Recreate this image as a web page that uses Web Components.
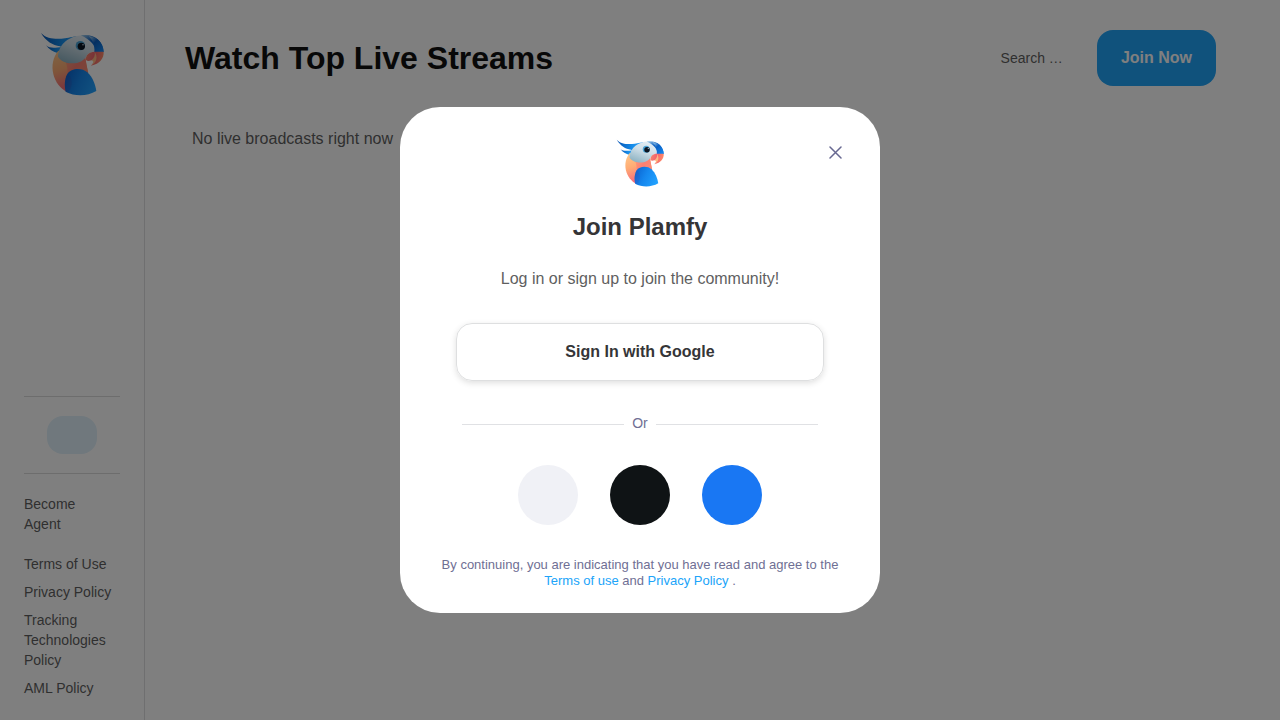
<!DOCTYPE html>
<html lang="en">
<head>
<meta charset="utf-8">
<title>Plamfy</title>
<style>
html,body{margin:0;height:100%;overflow:hidden;background:#fff}
body{font-family:"Liberation Sans",Arial,sans-serif;color:#5f5f61}
</style>
</head>
<body>
<plamfy-app></plamfy-app>
<script>
let logoCount = 0;
const define = (name, html) => customElements.define(name, class extends HTMLElement {
  constructor() {
    super();
    this.attachShadow({mode: 'open'}).innerHTML = typeof html === 'function' ? html() : html;
  }
});

define('plamfy-logo', () => {
  const n = ++logoCount;
  return `
<style>:host{display:block;width:var(--size,64px);height:var(--size,64px)}svg{display:block;width:100%;height:100%}</style>
<svg viewBox="24 24 192 192" aria-hidden="true">
<defs>
<linearGradient id="body${n}" x1=".1" y1="0" x2=".4" y2="1"><stop offset="0" stop-color="#ffc98a"/><stop offset=".45" stop-color="#ffac74"/><stop offset="1" stop-color="#f5607c"/></linearGradient>
<linearGradient id="neck${n}" x1="0" y1="0" x2="1" y2=".6"><stop offset="0" stop-color="#ffa27a"/><stop offset=".6" stop-color="#fb7f72"/><stop offset="1" stop-color="#f98a72"/></linearGradient>
<linearGradient id="face${n}" x1=".8" y1="0" x2=".3" y2="1"><stop offset="0" stop-color="#e6eff6"/><stop offset=".45" stop-color="#cfdfe8"/><stop offset="1" stop-color="#8fb4c4"/></linearGradient>
<linearGradient id="wing${n}" x1="0" y1=".3" x2="1" y2=".7"><stop offset="0" stop-color="#0b66d2"/><stop offset=".45" stop-color="#1587ee"/><stop offset="1" stop-color="#22a2ff"/></linearGradient>
<linearGradient id="crest${n}"><stop offset="0" stop-color="#0754b4"/><stop offset=".6" stop-color="#168eeb"/><stop offset="1" stop-color="#2f9ff2"/></linearGradient>
<linearGradient id="crown${n}" x1="0" y1="0" x2="1" y2="1"><stop offset="0" stop-color="#b5d9ee"/><stop offset=".4" stop-color="#0a5fc2"/><stop offset="1" stop-color="#168cf5"/></linearGradient>
<linearGradient id="beak${n}" x1="0" y1="0" x2="1" y2=".2"><stop offset="0" stop-color="#f58b6c"/><stop offset=".5" stop-color="#f4626f"/><stop offset="1" stop-color="#ff8c68"/></linearGradient>
</defs>
<path fill="url(#crest${n})" d="M27 27C43 44 66 45 88 44C104 43 114 40 134 37L98 76L84 67C62 64 42 52 27 27Z"/>
<path fill="url(#crest${n})" d="M42 64C54 74 67 72 91 69L79 88C63 83 51 77 42 64Z"/>
<path fill="url(#body${n})" d="M79 80C46 119 62 184 107 204L150 191L168 145L160 104Z"/>
<path fill="url(#neck${n})" d="M98 108L160 92C161 115 166 130 168 146L106 156C108 140 106 122 98 108Z"/>
<path fill="url(#wing${n})" d="M101 203C96 183 98 164 106 150C117 132 150 130 166 145C182 160 190 181 193 201C166 217 129 218 101 203Z"/>
<path fill="#3f4bb0" opacity=".25" d="M106 150C123 160 124 188 107 206L101 203C97 186 98 166 106 150Z"/>
<path fill="url(#face${n})" d="M78 98C80 58 115 35 152 34C176 36 191 57 190 84C178 82 170 88 164 95C156 110 142 118 120 118C100 118 84 109 78 98Z"/>
<path fill="url(#crown${n})" d="M146 34C185 27 214 50 215 84H189C191 65 177 48 146 34Z"/>
<path fill="url(#crown${n})" d="M170 37C198 39 214 59 215 84H187C190 64 182 49 170 37Z"/>
<path fill="url(#beak${n})" d="M162 108C160 93 172 82 190 83H215C216 103 204 119 177 125C188 115 185 108 178 109C171 111 166 112 162 108Z"/>
<path fill="#ffd98c" opacity=".7" d="M178 109C187 102 190 93 188 83C198 98 195 116 177 125C186 117 185 112 178 109Z"/>
<circle cx="145" cy="65" r="14" fill="#4ba3d4"/>
<circle cx="148" cy="67" r="11" fill="#0b1420"/><circle cx="153" cy="62" r="2.2" fill="#cfe4f0"/>
</svg>`;
});

define('side-bar', `
<style>
:host{box-sizing:border-box;display:flex;flex-direction:column;width:145px;height:100%;padding:32px 24px 22px;border-right:1px solid #dedfe0;font-size:14px;line-height:20px}
plamfy-logo{align-self:center}
.lang{margin-top:auto;padding:19px 0;border:solid #dadada;border-width:1px 0;display:flex;justify-content:center}
.pill{width:50px;height:38px;border-radius:16px;background:#e0f1fa}
nav{display:flex;flex-direction:column;gap:8px;margin-top:20px}
::slotted(:first-child){margin-bottom:12px}
</style>
<plamfy-logo></plamfy-logo>
<div class="lang"><span class="pill"></span></div>
<nav><slot></slot></nav>`);

define('primary-button', `
<style>:host{box-sizing:border-box;display:flex;align-items:center;justify-content:center;width:119px;height:56px;border-radius:16px;background:#20a4f9;color:#fff;font-size:16px;font-weight:700}</style><slot></slot>`);

define('page-header', `
<style>
:host{display:flex;align-items:center;height:56px}
h1{margin:0;flex:1;color:#111;font-size:32px;line-height:40px;font-weight:700}
.search{font-size:14px;margin-right:34.2px}
</style>
<h1><slot></slot></h1><span class="search">Search …</span><primary-button>Join Now</primary-button>`);

define('social-button', `
<style>:host{display:block;width:60px;height:60px;border-radius:50%;background:var(--fill)}</style>`);

define('google-button', `
<style>:host{box-sizing:border-box;display:flex;align-items:center;justify-content:center;width:368px;height:58px;border:1px solid #dedfe0;border-radius:16px;box-shadow:0 2px 6px rgba(0,0,0,.13);color:#353537;font-size:16px;font-weight:700}</style><slot></slot>`);

define('or-divider', `
<style>:host{display:flex;align-items:center;gap:8px;width:356px;height:20px;font-size:14px;line-height:20px;color:#6f6f94}
i{flex:1;height:1px;background:#e0e1e4;margin-top:3px}</style><i></i><slot></slot><i></i>`);

define('join-dialog', `
<style>
:host{box-sizing:border-box;position:relative;display:flex;flex-direction:column;align-items:center;width:480px;height:506px;padding-top:32px;border-radius:40px;background:#fff;text-align:center}
plamfy-logo{--size:48px}
.close{position:absolute;top:39px;right:38px;width:13px;height:13px}
h2{margin:24px 0 0;font-size:24px;line-height:32px;color:#353537}
.lead{margin:24px 0 0;font-size:16px;line-height:24px}
google-button{margin-top:32px}
or-divider{margin-top:32px}
.social{display:flex;gap:32px;margin-top:32px}
.legal{margin:32px 0 0;width:416px;font-size:13px;line-height:16px;color:#6f6f94}
a{color:#20a4f9}
</style>
<svg class="close" viewBox="0 0 13 13" fill="none" stroke="#676891" stroke-width="1.5" stroke-linecap="round"><path d="M1 1L12 12M12 1L1 12"/></svg>
<plamfy-logo></plamfy-logo>
<h2>Join Plamfy</h2>
<p class="lead">Log in or sign up to join the community!</p>
<google-button>Sign In with Google</google-button>
<or-divider>Or</or-divider>
<div class="social"><social-button style="--fill:#f0f1f6"></social-button><social-button style="--fill:#0f1315"></social-button><social-button style="--fill:#1977f3"></social-button></div>
<p class="legal">By continuing, you are indicating that you have read and agree to the <a>Terms of use</a> and <a>Privacy Policy</a> .</p>`);

define('plamfy-app', `
<style>
:host{display:flex;height:100vh}
side-bar{flex:none}
main{flex:1;padding:30px 64px 0 40px}
.empty{margin:41px 0 0 7px;font-size:16px;line-height:24px}
.overlay{position:fixed;inset:0;display:flex;align-items:center;justify-content:center;background:rgba(0,0,0,.5)}
</style>
<side-bar><span>Become<br>Agent</span><span>Terms of Use</span><span>Privacy Policy</span><span>Tracking Technologies Policy</span><span>AML Policy</span></side-bar>
<main><page-header>Watch Top Live Streams</page-header><p class="empty">No live broadcasts right now</p></main>
<div class="overlay"><join-dialog></join-dialog></div>`);
</script>
</body>
</html>
